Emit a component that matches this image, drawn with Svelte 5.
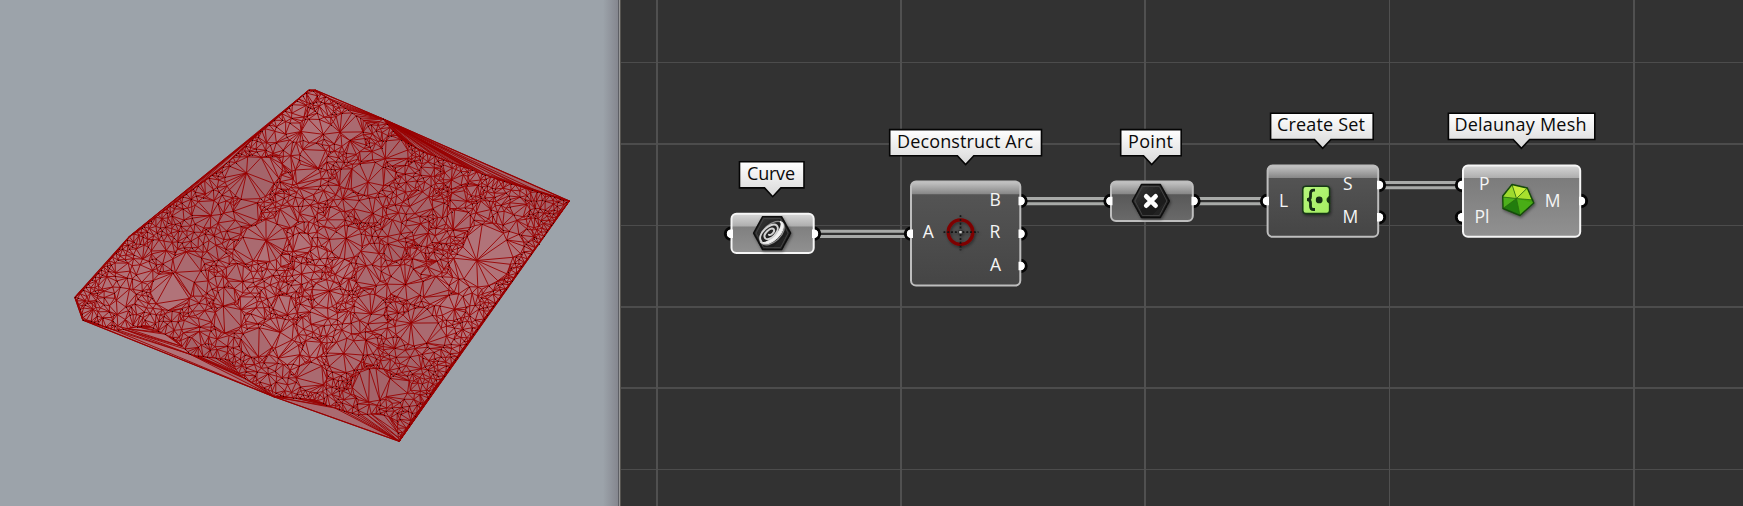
<script>
  let seed = 20177;
  const rnd = () => {
    seed = (seed * 1664525 + 1013904223) % 4294967296;
    return seed / 4294967296;
  };
  const X = (v) => 50 + v / 2.904;
  const Y = (v) => 70 + v / 3;
  const hull = [[752,60],[770,60],[968,147],[1508,393],[1014,1114],[650,980],[95,750],[72,682],[230,500],[610,183]];
  const inner = [[752,62],[772,64],[850,110],[930,165],[968,150],[1015,205],[1080,245],[1200,290],[1300,328],[1400,360],[1500,393],[1460,460],[1012,1105],[1008,1052],[960,1030],[895,1034],[830,1016],[770,990],[680,980],[600,945],[550,915],[525,870],[410,855],[360,805],[280,765],[190,782],[97,745],[76,684],[232,502],[375,388],[490,302],[612,186]];
  // empty cells: centre, radius, and whether a vertex sits in the middle
  const voids = [
    [872,160,52,0],[880,215,38,1],[1003,245,48,0],[765,258,40,0],[590,322,78,1],[645,298,42,0],[750,325,42,0],[920,325,62,1],
    [865,326,34,0],[860,390,38,1],[925,420,50,1],[455,430,45,1],[575,425,48,0],[690,440,34,0],[625,510,68,1],[570,540,48,0],
    [330,545,34,1],[400,585,50,0],[355,665,58,0],[420,640,44,1],[220,680,34,0],[730,520,34,0],[860,520,55,1],[1075,400,46,0],
    [1190,450,38,0],[1255,520,68,0],[1257,570,80,1],[1338,522,42,1],[1200,590,50,0],[1035,640,52,1],[1118,660,48,0],[1170,710,40,1],
    [1065,770,62,1],[1115,800,44,0],[805,670,44,1],[925,620,42,0],[930,720,46,1],[950,760,34,0],[660,790,58,1],[600,815,50,0],
    [690,845,42,0],[520,745,46,0],[515,680,32,0],[410,770,34,0],[855,860,52,1],[935,945,62,0],[1010,955,48,0],[760,920,46,0],
    [630,920,32,1],[765,835,30,0],[575,700,32,0],[850,595,38,0],[680,705,34,0],[780,735,36,0],[1000,545,32,0],[920,820,36,1],
    [1095,300,26,0],[975,320,30,0],[640,620,28,1],[735,610,30,1],[740,380,30,1],[480,500,30,1],[1170,325,30,1],[1225,730,26,1],
    [1000,830,30,1],[1200,780,26,1],[800,120,26,0],[620,240,22,1],[1040,340,28,1],[775,585,24,1],[430,700,30,1],[855,740,26,0],[1140,500,22,0]
  ].map(([x, y, r, hub], i) => [x, y, r * 0.97, hub, 0.72 + ((i * 37) % 23) / 60, ((i * 53) % 31) / 10]);
  const inside = (x, y, poly) => {
    let r = false;
    for (let i = 0, j = poly.length - 1; i < poly.length; j = i++) {
      const [a, b] = poly[i], [c, d] = poly[j];
      if (b > y !== d > y && x < ((c - a) * (y - b)) / (d - b) + a) r = !r;
    }
    return r;
  };
  const inVoid = (x, y, f) =>
    voids.some(([a, b, r, , q, w]) => {
      const c = Math.cos(w), s = Math.sin(w), dx = x - a, dy = y - b;
      return Math.hypot(dx * c + dy * s, (dy * c - dx * s) / q) < r * f;
    });
  const pts = [];
  const buckets = new Map();
  const add = (x, y, min) => {
    const gx = Math.floor(x / 40), gy = Math.floor(y / 40);
    for (let i = gx - 1; i <= gx + 1; i++)
      for (let j = gy - 1; j <= gy + 1; j++)
        for (const p of buckets.get(i * 1000 + j) || []) if (Math.hypot(p[0] - x, p[1] - y) < min) return;
    const key = gx * 1000 + gy;
    if (!buckets.has(key)) buckets.set(key, []);
    buckets.get(key).push([x, y]);
    pts.push([x, y]);
  };
  hull.forEach(([x, y]) => add(x, y, 1));
  inner.forEach(([x, y], i) => {
    const [a, b] = inner[(i + 1) % inner.length];
    const n = Math.ceil(Math.hypot(a - x, b - y) / 14);
    for (let k = 0; k < n; k++) {
      const t = (k + rnd() * 0.5) / n;
      const qx = x + (a - x) * t + (rnd() - 0.5) * 2, qy = y + (b - y) * t + (rnd() - 0.5) * 2;
      if (inside(qx, qy, hull)) add(qx, qy, 5);
    }
  });
  for (const [a, b, r, hub, q, w] of voids) {
    if (hub) add(a + (rnd() - 0.5) * r * 0.6, b + (rnd() - 0.5) * r * 0.6, 5);
    const n = Math.round(r / 3.3) + 2;
    for (let k = 0; k < n; k++) {
      const t = ((k + rnd() * 1.3) / n) * Math.PI * 2, rr = r * (0.94 + rnd() * 0.2);
      const u = Math.cos(t) * rr, v = Math.sin(t) * rr * q;
      const x = a + u * Math.cos(w) - v * Math.sin(w), y = b + u * Math.sin(w) + v * Math.cos(w);
      if (inside(x, y, inner) && !inVoid(x, y, 0.86)) add(x, y, 7);
    }
  }
  // vertices strung along short arcs give the clustered, uneven grain
  for (let k = 0; k < 1150; k++) {
    const x = 70 + rnd() * 1440, y = 60 + rnd() * 1050, a0 = rnd() * 6.3, r = 14 + rnd() * 34, n = 3 + Math.floor(rnd() * 5);
    const l = Math.sin(x / 47 + y / 83) + Math.sin(y / 39 - x / 71);
    for (let i = 0; i < n; i++) {
      const t = a0 + i * 0.32, px = x + Math.cos(t) * r, py = y + Math.sin(t) * r;
      if (inside(px, py, inner) && !inVoid(px, py, 0.98)) add(px, py, 8.5 + l * 2);
    }
  }
  for (let k = 0; k < 4200; k++) {
    const x = 70 + rnd() * 1440, y = 60 + rnd() * 1050;
    if (!inside(x, y, inner) || inVoid(x, y, 0.98)) continue;
    const side = Math.abs((x - 1260) * 0.82 + (y - 750) * 0.57) < 60 || (x < 700 && Math.abs(y - 183 - (610 - x) * 0.9) < 60);
    if (side || rnd() < 0.4) add(x, y, side ? 9 : 15);
  }
  const circum = (a, b, c) => {
    const [ax, ay] = pts[a], bx = pts[b][0] - ax, by = pts[b][1] - ay, cx = pts[c][0] - ax, cy = pts[c][1] - ay;
    const d = 2 * (bx * cy - by * cx) || 1e-9, B = bx * bx + by * by, C = cx * cx + cy * cy;
    const ux = (cy * B - by * C) / d, uy = (bx * C - cx * B) / d;
    return { v: [a, b, c], x: ax + ux, y: ay + uy, r: ux * ux + uy * uy };
  };
  pts.sort((p, q) => p[0] - q[0]);
  const N = pts.length;
  pts.push([-90000, -60000], [90000, -60000], [800, 120000]);
  let open = [circum(N, N + 1, N + 2)];
  const closed = [];
  for (let i = 0; i < N; i++) {
    const [x, y] = pts[i], keep = [], rim = new Map();
    for (const t of open) {
      const dx = x - t.x, dy = y - t.y;
      if (dx > 0 && dx * dx > t.r) closed.push(t);
      else if (dx * dx + dy * dy > t.r) keep.push(t);
      else
        for (const [a, b] of [[0, 1], [1, 2], [2, 0]]) {
          const p = Math.min(t.v[a], t.v[b]), q = Math.max(t.v[a], t.v[b]), key = p * 10000 + q;
          if (rim.has(key)) rim.delete(key);
          else rim.set(key, [p, q]);
        }
    }
    for (const [p, q] of rim.values()) keep.push(circum(p, q, i));
    open = keep;
  }
  const faces = [...closed, ...open].filter((t) => t.v.every((i) => i < N));
  const at = (i) => X(pts[i][0]).toFixed(1) + ' ' + Y(pts[i][1]).toFixed(1);
  const used = new Set();
  let edges = '';
  const shades = ['', '', ''];
  faces.forEach(({ v: [a, b, c] }) => {
    const g = Math.sin(pts[a][0] / 90) + Math.cos(pts[a][1] / 110);
    shades[g < -0.5 ? 0 : g < 0.6 ? 1 : 2] += `M${at(a)}L${at(b)}L${at(c)}Z`;
    for (const [p, q] of [[a, b], [b, c], [c, a]]) {
      const key = Math.min(p, q) * 10000 + Math.max(p, q);
      if (!used.has(key)) {
        used.add(key);
        edges += `M${at(p)}L${at(q)}`;
      }
    }
  });
  const outline = 'M' + hull.map(([x, y]) => `${X(x)} ${Y(y)}`).join('L') + 'Z';
  const dots = pts.slice(0, N).filter((_, i) => i % 2 === 0).map(([x, y]) => `M${Math.round(X(x))} ${Math.round(Y(y))}h1v1h-1z`).join('');
  // long slivers that fan out along the hollow side
  let fans = '';
  const fan = (from, line, steps) => {
    for (let i = 0; i < line.length - 1; i++)
      for (let k = 0; k < steps; k++) {
        const t = k / steps;
        fans += `M${X(from[0])} ${Y(from[1])}L${X(line[i][0] + (line[i + 1][0] - line[i][0]) * t)} ${Y(line[i][1] + (line[i + 1][1] - line[i][1]) * t)}`;
      }
  };
  fan([968, 147], [[1015, 205], [1080, 245], [1200, 290], [1270, 312]], 7);
  fan([1508, 393], [[1270, 312], [1300, 328], [1400, 360]], 3);

  const vLines = [[656, 2], [900, 2], [1144, 2], [1389, 1], [1633, 2]];
  const hLines = [[62, 1], [143, 2], [225, 1], [306, 2], [387, 2], [469, 1]];
  const wires = [[820, 905, 233.7], [1026, 1105, 201], [1198, 1262, 201], [1384, 1457, 185]];
  const nodes = [
    { name: 'Curve', lx: 739.5, lw: 64.5, ly: 161.7, tip: 772.7, tx: 747, tw: 48, x: 731.5, y: 213.7, w: 82.2, h: 39.4, tone: 'light', icon: 'curve', ports: [[731, 233.7, 0], [814, 233.7, 1]], text: [] },
    { name: 'Deconstruct Arc', lx: 889.7, lw: 151.8, ly: 129.6, tip: 965.6, tx: 897, tw: 136, x: 911, y: 181.6, w: 109.3, h: 104, tone: 'dark', icon: 'arc', ports: [[911, 233.7, 0], [1020.5, 201, 1], [1020.5, 233.7, 1], [1020.5, 266, 1]], text: [['A', 922.8, 238.3], ['B', 989.6, 206], ['R', 989.6, 238.3], ['A', 990, 271]] },
    { name: 'Point', lx: 1120.7, lw: 60.5, ly: 129.6, tip: 1151.7, tx: 1128, tw: 45, x: 1111, y: 181.6, w: 81.8, h: 39.4, tone: 'mid', icon: 'point', ports: [[1110.5, 201, 0], [1193.5, 201, 1]], text: [] },
    { name: 'Create Set', lx: 1270.6, lw: 102.6, ly: 113.3, tip: 1322.7, tx: 1277, tw: 88, x: 1267.6, y: 165.4, w: 110.6, h: 71.4, tone: 'dark', icon: 'set', ports: [[1267, 201, 0], [1379, 185, 1], [1379, 217.3, 1]], text: [['L', 1279, 206.5], ['S', 1343, 190], ['M', 1342.5, 222.7]] },
    { name: 'Delaunay Mesh', lx: 1448.4, lw: 146.4, ly: 113.3, tip: 1521.4, tx: 1454.5, tw: 132, x: 1463, y: 165.4, w: 117.2, h: 71.4, tone: 'light', icon: 'mesh', ports: [[1462, 185, 0], [1462, 217.3, 0], [1581, 201, 1]], text: [['P', 1479, 190], ['Pl', 1474.5, 222.7], ['M', 1544.7, 206.5]] }
  ];
</script>

<main>
  <section class="viewport">
    <svg width="618" height="506" viewBox="0 0 618 506">
      <path d={outline} fill="#aa6a70" />
      {#each shades as d, i}
        <path {d} fill={['#a4646a', '#aa6a70', '#b17379'][i]} />
      {/each}
      <path d={edges} class="edge" />
      <path d={fans} class="fan" />
      <path d={outline} class="rim" />
      <path d={dots} fill="#160000" opacity=".8" />
    </svg>
  </section>
  <div class="splitter"></div>
  <section class="canvas">
    <svg width="1122" height="506" viewBox="621 0 1122 506">
      <defs>
        <linearGradient id="label" x2="0" y2="1"><stop stop-color="#fff" /><stop offset="1" stop-color="#d8d8d8" /></linearGradient>
        <linearGradient id="light" x2="0" y2="1"><stop stop-color="#777" /><stop offset="1" stop-color="#919191" /></linearGradient>
        <linearGradient id="dark" x2="0" y2="1"><stop stop-color="#565656" /><stop offset="1" stop-color="#454545" /></linearGradient>
        <linearGradient id="mid" x2="0" y2="1"><stop stop-color="#505050" /><stop offset="1" stop-color="#6a6a6a" /></linearGradient>
        <linearGradient id="glossl" x2="0" y2="1"><stop stop-color="#d8d8d8" /><stop offset="1" stop-color="#adadad" /></linearGradient>
        <linearGradient id="glossd" x2="0" y2="1"><stop stop-color="#c6c6c6" /><stop offset="1" stop-color="#858585" /></linearGradient>
        <linearGradient id="lime" x2="1" y2="1"><stop stop-color="#b7f77d" /><stop offset="1" stop-color="#a4ed60" /></linearGradient>
        <linearGradient id="hex" x2="1" y2="1"><stop stop-color="#3c3c3c" /><stop offset=".6" stop-color="#1a1a1a" /><stop offset="1" stop-color="#2c2c2c" /></linearGradient>
        <filter id="shadow" x="-30%" y="-30%" width="170%" height="170%"><feDropShadow dx="1" dy="1.5" stdDeviation="1.5" flood-opacity=".45" /></filter>
      </defs>
      {#each hLines as [y, h]}<rect x="621" {y} width="1122" height={h} fill="#4c4c4c" />{/each}
      {#each vLines as [x, w]}<rect {x} y="0" width={w} height="506" fill="#505050" />{/each}
      {#each wires as [a, b, y]}
        <rect x={a} y={y - 4} width={b - a} height="8.4" fill="#303030" />
        <path d="M{a} {y - 2.5}H{b}M{a} {y + 2.7}H{b}" stroke="#a8aaa8" stroke-width="3" />
      {/each}
      {#each nodes as n}
        <path d="M{n.lx} {n.ly}h{n.lw}v26.2H{n.tip + 8.2}l-8.2 8.8l-8.2 -8.8H{n.lx}z" fill="url(#label)" stroke="#050505" stroke-width="1.6" />
        <text x={n.tx} y={n.ly + 18} class="name" textLength={n.tw}>{n.name}</text>
        {#each n.ports as [x, y]}<circle cx={x} cy={y} r="5.6" fill="#fff" stroke="#050505" stroke-width="3.1" />{/each}
        <rect x={n.x} y={n.y} width={n.w} height={n.h} rx="5" fill="url(#{n.tone})" />
        <path d="M{n.x} {n.y + 12.7}v-7.7q0 -5 5 -5h{n.w - 10}q5 0 5 5v7.7z" fill="url(#{n.tone === 'light' ? 'glossl' : 'glossd'})" />
        <rect x={n.x} y={n.y} width={n.w} height={n.h} rx="5" fill="none" stroke={n.tone === 'light' ? '#f6f6f6' : '#bebebe'} stroke-width="2" />
        {#each n.ports as [x, y, side]}
          <path d={side ? `M${x} ${y - 4.2}a4.2 4.2 0 0 1 0 8.4h-2v-8.4z` : `M${x} ${y - 4.2}a4.2 4.2 0 0 0 0 8.4h2v-8.4z`} fill="#fff" />
        {/each}
        {#each n.text as [t, x, y]}<text {x} {y} class="port">{t}</text>{/each}
        {#if n.icon === 'curve' || n.icon === 'point'}
          <g transform="translate({n.x + (n.icon === 'curve' ? 40.6 : 39.9)} {n.y + 19.4})" filter="url(#shadow)">
            <path d="M-9.5 -16.5H9.5L18.5 0L9.5 16.5H-9.5L-18.5 0Z" fill="url(#hex)" stroke="#0b0b0b" stroke-width="1.4" stroke-linejoin="round" />
            <path d="M-8.5 -14.5H8.5L16 0L8.5 14.5H-8.5L-16 0Z" fill="none" stroke="#464646" stroke-width=".9" />
            {#if n.icon === 'curve'}
              <g transform="rotate(-43)" fill="none" stroke-linecap="round">
                <ellipse rx="14.6" ry="8.6" stroke="#8d8d8d" stroke-width="1.2" />
                <path d="M-14.3 0A14.6 8.6 0 0 0 14.6 -.5L14 -3.4A15 7.4 0 0 1 -14.3 0Z" fill="#f2f2f2" stroke="#eee" />
                <path d="M-13.6 -1C-13 -10 8 -9.5 8.6 -2.5C8.6 4.5 -8.4 5 -8.6 -.8C-8.4 -6 3.6 -5.6 3.8 -1.6C3.6 1.2 -3 1.2 -3.4 -1" stroke="#d2d2d2" stroke-width="2" />
              </g>
            {:else}
              <path d="M-4.7 -4.7L4.7 4.7M4.7 -4.7L-4.7 4.7" stroke="#fff" stroke-width="4.6" stroke-linecap="round" />
            {/if}
          </g>
        {:else if n.icon === 'arc'}
          <g transform="translate(960.5 232.2)" filter="url(#shadow)">
            <circle r="12.3" fill="none" stroke="#7e0000" stroke-width="3.4" />
            <path d="M-17 0H18M0 -17V18" stroke="#141414" stroke-width="1.8" stroke-dasharray="1.9 1.9" />
            <rect x="-1.6" y="-1.6" width="3.2" height="3.2" fill="#ccc" stroke="#222" stroke-width=".7" />
          </g>
        {:else if n.icon === 'set'}
          <g transform="translate(1302 185.5)" filter="url(#shadow)">
            <rect x=".8" y=".8" width="26.8" height="27.2" rx="3" fill="url(#lime)" stroke="#173716" stroke-width="1.5" />
            <path d="M13 4.6H11.6Q8.5 4.6 8.5 8V11Q8.5 14.2 5 14.2Q8.5 14.2 8.5 17.5V20.7Q8.5 24 11.6 24H13" fill="none" stroke="#142f12" stroke-width="2.8" />
            <circle cx="17.2" cy="14.4" r="3.4" fill="#142f12" />
            <path d="M27.6 11C24.2 11.6 24.2 17 27.6 17.8z" fill="#142f12" stroke="#142f12" />
          </g>
        {:else}
          <g transform="translate(1430 100)" filter="url(#shadow)" stroke-linejoin="round">
            <path d="M82 84.5L97.3 88L103.8 103L90 115.5L73 108.5L72.7 96Z" fill="#43a50e" />
            <path d="M82 84.5L97.3 88L86.5 98.5Z" fill="#c8ee3b" /><path d="M97.3 88L101.5 99.7L86.5 98.5Z" fill="#a8e02d" /><path d="M82 84.5L86.5 98.5L73 97Z" fill="#9edb2e" />
            <path d="M73 97L86.5 98.5L73 108.5Z" fill="#4eb01a" /><path d="M73 108.5L86.5 98.5L90 115.5Z" fill="#237d08" /><path d="M86.5 98.5L103.8 103L90 115.5Z" fill="#48ad15" />
            <path d="M86.5 98.5L82 84.5M86.5 98.5L97.3 88M86.5 98.5L103.8 100M86.5 98.5L90 115.5M86.5 98.5L73 108.5M86.5 98.5L72.7 97" fill="none" stroke="#286b12" stroke-width=".8" />
            <path d="M82 84.5L97.3 88L103.8 103L90 115.5L73 108.5L72.7 96Z" fill="none" stroke="#17490a" stroke-width="1.4" />
          </g>
        {/if}
      {/each}
    </svg>
  </section>
</main>

<style>
  main { display: flex; width: 1743px; height: 506px; overflow: hidden; background: #323232; }
  .viewport { width: 618px; flex: none; background: linear-gradient(90deg, #9ca3aa 0, #9ca3aa 603px, #85878f 618px); }
  .splitter { width: 3px; flex: none; background: linear-gradient(90deg, #5e6066 0 1px, #989898 1px 2px, #55534f 2px); }
  .canvas { flex: 1; }
  svg { display: block; }
  text { font-family: 'Open Sans', 'Noto Sans', sans-serif; font-size: 18px; }
  .name { fill: #0a0a0a; }
  .port { fill: #f5f5f5; font-size: 17.5px; }
  .edge, .fan, .rim { fill: none; stroke: #980000; stroke-width: .9; }
  .fan { stroke-width: .7; }
  .rim { stroke-width: 1.1; }
</style>
